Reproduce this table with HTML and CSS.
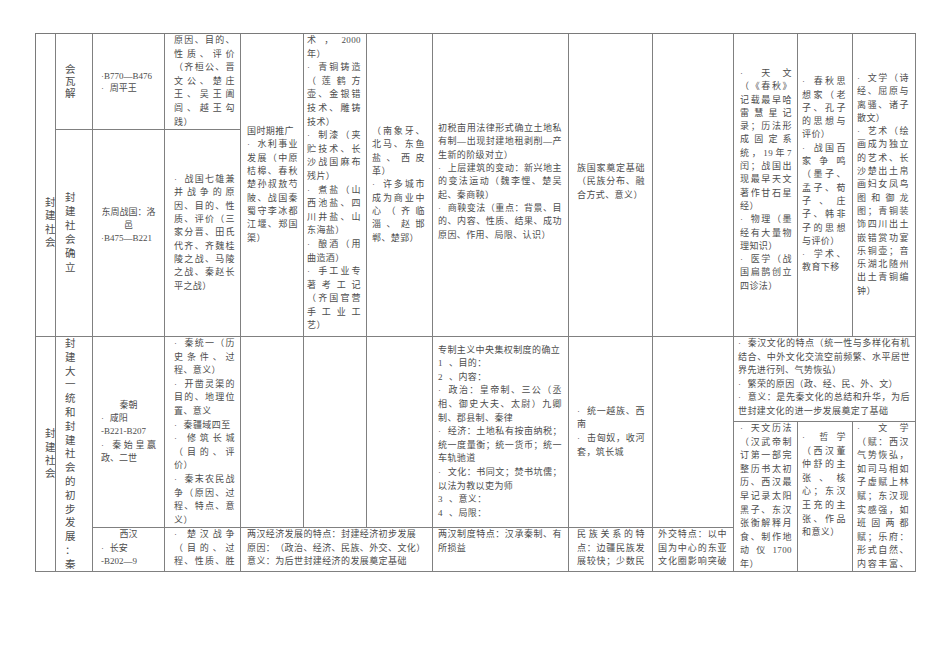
FILE: index.html
```html
<!DOCTYPE html>
<html lang="zh-CN">
<head>
<meta charset="utf-8">
<title>封建社会</title>
<link rel="stylesheet" href="styles.css">
</head>
<body>
<div class="sheet">
  <!-- upper block -->
  <div class="cell x1 y12 k1 top off1"><div class="v lh133">封建社会</div></div>
  <div class="cell x2 y1 k2"><div class="v lh12">会瓦解</div></div>
  <div class="cell x3 y1 k3 lh12"><p>·B770—B476</p><p>· 周平王</p></div>
  <div class="cell x4 y1 k4 top lh6"><p>原因、目的、性质、评价（齐桓公、晋文公、楚庄王、吴王阖闾、越王勾践）</p></div>
  <div class="cell x2 y2 k2"><div class="v lh14">封建社会确立</div></div>
  <div class="cell x3 y2 k3 lh13 up8"><p class="ctr">东周战国：洛邑</p><p>·B475—B221</p></div>
  <div class="cell x4 y2 k4"><p>· 战国七雄兼并战争的原因、目的、性质、评价（三家分晋、田氏代齐、齐魏桂陵之战、马陵之战、秦赵长平之战）</p></div>
  <div class="cell x5 y12 k5"><p>国时期推广</p><p>· 水利事业发展（中原桔槔、春秋楚孙叔敖芍陂、战国秦蜀守李冰都江堰、郑国渠）</p></div>
  <div class="cell x6 y12 k6 top lh6"><p>术，2000年）</p><p>· 青铜铸造（莲鹤方壶、金银错技术、雕铸技术）</p><p>· 制漆（夹贮技术、长沙战国麻布残片）</p><p>· 煮盐（山西池盐、四川井盐、山东海盐）</p><p>· 酿酒（用曲造酒）</p><p>· 手工业专著考工记（齐国官营手工业工艺）</p></div>
  <div class="cell x7 y12 k7"><p>（南象牙、北马、东鱼盐、西皮革）</p><p>· 许多城市成为商业中心（齐临淄、赵邯郸、楚郢）</p></div>
  <div class="cell x8 y12 k8 up6"><p>初税亩用法律形式确立土地私有制—出现封建地租剥削—产生新的阶级对立）</p><p>· 上层建筑的变动：新兴地主的变法运动（魏李悝、楚吴起、秦商鞅）</p><p>· 商鞅变法（重点：背景、目的、内容、性质、结果、成功原因、作用、局限、认识）</p></div>
  <div class="cell x9 y12 k9 up6"><p>族国家奠定基础（民族分布、融合方式、意义）</p></div>
  <div class="cell x10 y12 k10"></div>
  <div class="cell x11 y12 k11 up8"><p>· 天文（《春秋》记载最早哈雷慧星记录；历法形成固定系统，19年7闰；战国出现最早天文著作甘石星经）</p><p>· 物理（墨经有大量物理知识）</p><p>· 医学（战国扁鹊创立四诊法）</p></div>
  <div class="cell x12 y12 k12 up20"><p>· 春秋思想家（老子、孔子的思想与评价）</p><p>· 战国百家争鸣（墨子、孟子、荀子、庄子、韩非子的思想与评价）</p><p>· 学术、教育下移</p></div>
  <div class="cell x13 y12 k13"><p>· 文学（诗经、屈原与离骚、诸子散文）</p><p>· 艺术（绘画成为独立的艺术、长沙楚出土帛画妇女凤鸟图和御龙图；青铜装饰四川出土嵌错赏功宴乐铜壶；音乐湖北随州出土青铜编钟）</p></div>

  <!-- lower block -->
  <div class="cell x1 y36 k1"><div class="v lh133">封建社会</div></div>
  <div class="cell x2 y36 k2 top"><div class="v lh138">封建大一统和封建社会的初步发展：秦</div></div>
  <div class="cell x3 y35 k3 lh133"><p class="ctr">秦朝</p><p>· 咸阳</p><p>-B221-B207</p><p>· 秦始皇嬴政、二世</p></div>
  <div class="cell x4 y35 k4 top lh6"><p>· 秦统一（历史条件、过程、意义）</p><p>· 开凿灵渠的目的、地理位置、意义</p><p>· 秦疆域四至</p><p>· 修筑长城（目的、评价）</p><p>· 秦末农民战争（原因、过程、特点、意义）</p></div>
  <div class="cell x5 y35 k5"></div>
  <div class="cell x6 y35 k6"></div>
  <div class="cell x7 y35 k7"></div>
  <div class="cell x8 y35 k8 lh6"><p>专制主义中央集权制度的确立</p><p>1 、目的：</p><p>2 、内容：</p><p>· 政治：皇帝制、三公（丞相、御史大夫、太尉）九卿制、郡县制、秦律</p><p>· 经济：土地私有按亩纳税；统一度量衡；统一货币；统一车轨驰道</p><p>· 文化：书同文；焚书坑儒；以法为教以吏为师</p><p>3 、意义：</p><p>4 、局限：</p></div>
  <div class="cell x9 y35 k9 lh6"><p>· 统一越族、西南</p><p>· 击匈奴，收河套，筑长城</p></div>
  <div class="cell x10 y35 k10"></div>
  <div class="cell x1113 y3 k1113 top lh6"><p>· 秦汉文化的特点（统一性与多样化有机结合、中外文化交流空前频繁、水平居世界先进行列、气势恢弘）</p><p>· 繁荣的原因（政、经、民、外、文）</p><p>· 意义：是先秦文化的总结和升华，为后世封建文化的进一步发展奠定了基础</p></div>
  <div class="cell x11 y46 k11 top lh6"><p>· 天文历法（汉武帝制订第一部完整历书太初历、西汉最早记录太阳黑子、东汉张衡解释月食、制作地动仪1700年）</p></div>
  <div class="cell x12 y46 k12 top lh6 off12"><p>· 哲学（西汉董仲舒的主张、核心；东汉王充的主张、作品和意义）</p></div>
  <div class="cell x13 y46 k13 top lh6 last"><p>· 文学（赋：西汉气势恢弘，如司马相如子虚赋上林赋；东汉现实感强，如班固两都赋；乐府：形式自然、内容丰富、</p></div>
  <div class="cell x3 y5 k3 top lh6"><p class="ctr">西汉</p><p>· 长安</p><p>-B202—9</p></div>
  <div class="cell x4 y5 k4 top lh6 last"><p>· 楚汉战争（目的、过程、性质、胜</p></div>
  <div class="cell x57 y5 k57 top lh6"><p>两汉经济发展的特点：封建经济初步发展</p><p>原因：（政治、经济、民族、外交、文化）</p><p>意义：为后世封建经济的发展奠定基础</p></div>
  <div class="cell x8 y5 k8 top lh6"><p>两汉制度特点：汉承秦制、有所损益</p></div>
  <div class="cell x9 y5 k9 top lh6 last"><p>民族关系的特点：边疆民族发展较快；少数民</p></div>
  <div class="cell x10 y5 k10 top lh6 last"><p>外交特点：以中国为中心的东亚文化圈影响突破</p></div>
</div>
</body>
</html>
```

FILE: styles.css
```css
html, body {
  margin: 0;
  padding: 0;
  background: #ffffff;
}

body {
  color: #4d4d4d;
  font-family: "Liberation Serif", "Noto Sans CJK SC", serif;
}

.sheet {
  display: grid;
  grid-template-columns: 20px 37px 72px 76px 63px 63px 66px 136px 84px 81px 64px 55px 63px;
  grid-template-rows: 96px 207px 85px 106px 44px;
  width: max-content;
  margin: 33px 0 0 35px;
  border-top: 1px solid #7a7a7a;
  border-left: 1px solid #7a7a7a;
}

.cell {
  border-right: 1px solid #808080;
  border-bottom: 1px solid #808080;
  overflow: hidden;
  min-width: 0;
  display: flex;
  flex-direction: column;
  justify-content: center;
  font-size: 9px;
  letter-spacing: 0.4px;
  word-spacing: 3.5px;
  line-height: 13.3px;
  text-align: justify;
  text-spacing-trim: space-all;
}

.cell p {
  margin: 0;
}

.top { justify-content: flex-start; }
.ctr { text-align: center; }
.last p { text-align-last: justify; }

.lh6 { line-height: 13.6px; }
.lh12 { line-height: 12px; }
.lh13 { line-height: 13px; }
.lh133 { line-height: 13.3px; }
.lh14 { line-height: 14px; }
.lh138 { line-height: 13.8px; }

/* vertical (one character per line) labels */
.v {
  width: 1em;
  font-size: 10.5px;
  letter-spacing: 0;
  word-spacing: 0;
  line-break: anywhere;
  word-break: break-all;
  text-align: center;
}

/* grid placement */
.x1 { grid-column: 1; }
.x2 { grid-column: 2; }
.x3 { grid-column: 3; }
.x4 { grid-column: 4; }
.x5 { grid-column: 5; }
.x6 { grid-column: 6; }
.x7 { grid-column: 7; }
.x8 { grid-column: 8; }
.x9 { grid-column: 9; }
.x10 { grid-column: 10; }
.x11 { grid-column: 11; }
.x12 { grid-column: 12; }
.x13 { grid-column: 13; }
.x57 { grid-column: 5 / 8; }
.x1113 { grid-column: 11 / 14; }

.y1 { grid-row: 1; }
.y2 { grid-row: 2; }
.y12 { grid-row: 1 / 3; }
.y3 { grid-row: 3; }
.y35 { grid-row: 3 / 5; }
.y36 { grid-row: 3 / 6; }
.y46 { grid-row: 4 / 6; }
.y5 { grid-row: 5; }

/* column paddings */
.k1 { padding: 0 0 0 9px; }
.k2 { padding: 0 0 0 9px; }
.k3 { padding: 0 8px; letter-spacing: 0; }
.k4 { padding: 0 5px 0 9px; }
.k5 { padding: 0 5px 0 6px; }
.k6 { padding: 0 5px 0 3px; }
.k7 { padding: 0 7px 0 5px; }
.k8 { padding: 0 6px 0 5px; }
.k9 { padding: 0 7px 0 8px; }
.k10 { padding: 0 6px 0 5px; }
.k11 { padding: 0 5px 0 6px; }
.k12 { padding: 0 6px 0 4px; }
.k13 { padding: 0 6px 0 4px; }
.k57 { padding: 0 6px; }
.k1113 { padding: 0 5px 0 4px; }

.off1 { padding-top: 162px; }
.off12 { padding-top: 9px; }
.up6 { padding-bottom: 6px; }
.up8 { padding-bottom: 16px; }
.up20 { padding-bottom: 20px; }
.k11.up8 { padding-bottom: 10px; }
```
